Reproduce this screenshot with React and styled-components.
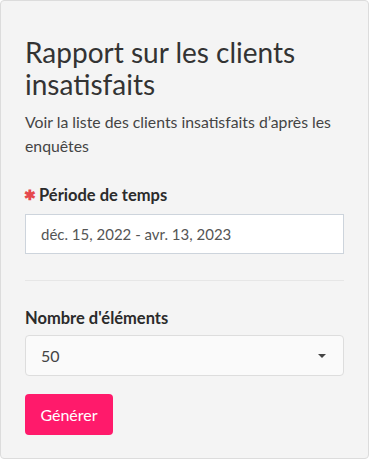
import React from "react";
import styled, { createGlobalStyle } from "styled-components";

const Global = createGlobalStyle`
  html, body { margin: 0; padding: 0; background: #ffffff; }
  body { font-family: Lato, "Noto Sans", sans-serif; color: #333; }
  * { box-sizing: border-box; }
`;

const Card = styled.div`
  width: 369px;
  height: 459px;
  background: #f4f4f4;
  border: 1px solid #dcdcdc;
  border-radius: 4px;
  padding: 35px 24px 0 24px;
  display: flex;
  flex-direction: column;
`;

const Title = styled.h1`
  margin: 0;
  font-size: 28px;
  font-weight: 400;
  line-height: 32px;
  color: #333;
`;

const Subtitle = styled.p`
  margin: 10px 0 0 0;
  font-size: 15.8px;
  line-height: 24px;
  color: #444;
`;

const Field = styled.div`
  display: flex;
  flex-direction: column;
  margin-top: ${(p) => p.$top}px;
`;

const Label = styled.label`
  font-size: 16.5px;
  font-weight: 700;
  color: #2b2b2b;
  line-height: 20px;
  display: flex;
  align-items: center;
  gap: 4px;
`;

const Required = styled.span`
  color: #e5484d;
  font-size: 14px;
  font-weight: 700;
  width: 10px;
  display: inline-flex;
  justify-content: center;
`;

const Input = styled.div`
  margin-top: 9px;
  height: 40px;
  background: #fff;
  border: 1px solid #cdd4dc;
  padding: 0 15px;
  display: flex;
  align-items: center;
  font-size: 15px;
  color: #555;
`;

const Divider = styled.hr`
  border: 0;
  border-top: 1px solid #e6e6e6;
  margin: 26px 0 0 0;
`;

const Select = styled.div`
  margin-top: 7px;
  height: 41px;
  background: #fafafa;
  border: 1px solid #dddddd;
  border-radius: 4px;
  padding: 0 15px;
  display: flex;
  align-items: center;
  justify-content: space-between;
  font-size: 16px;
  color: #444;
`;

const Caret = styled.span`
  width: 0;
  height: 0;
  border-left: 4px solid transparent;
  border-right: 4px solid transparent;
  border-top: 4px solid #444;
  margin-right: 2px;
`;

const Button = styled.button`
  margin-top: 18px;
  align-self: flex-start;
  width: 88px;
  height: 41px;
  background: #ff1a6b;
  color: #fff;
  border: 0;
  border-radius: 4px;
  font-family: inherit;
  font-size: 16px;
  padding: 0;
`;

export default function App() {
  return (
    <>
      <Global />
      <Card>
        <Title>Rapport sur les clients insatisfaits</Title>
        <Subtitle>Voir la liste des clients insatisfaits d’après les enquêtes</Subtitle>
        <Field $top={27}>
          <Label>
            <Required>✱</Required>Période de temps
          </Label>
          <Input>déc. 15, 2022 - avr. 13, 2023</Input>
        </Field>
        <Divider />
        <Field $top={27}>
          <Label>Nombre d'éléments</Label>
          <Select>
            <span>50</span>
            <Caret />
          </Select>
        </Field>
        <Button>Générer</Button>
      </Card>
    </>
  );
}
